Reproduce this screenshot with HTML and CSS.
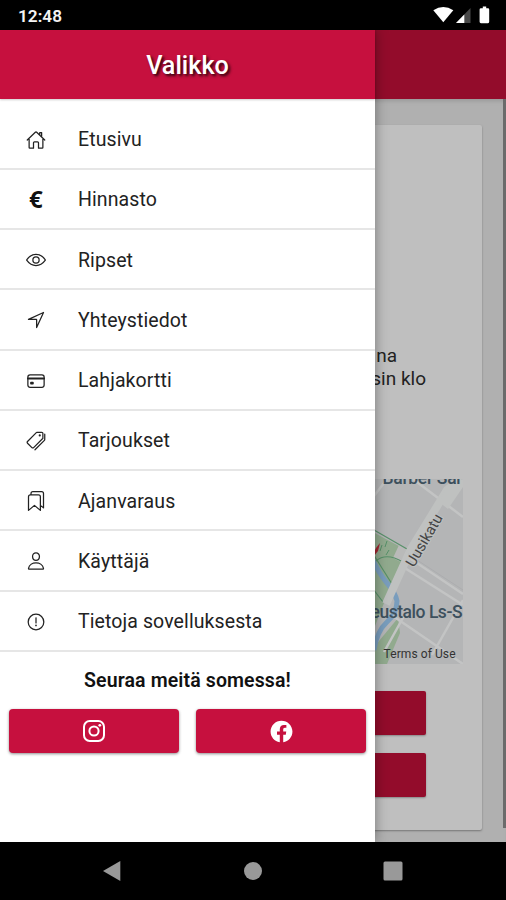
FILE: index.html
```html
<!DOCTYPE html>
<html lang="fi">
<head>
<meta charset="utf-8">
<title>Valikko</title>
<link rel="stylesheet" href="styles.css">
</head>
<body>
<div class="phone">
  <div class="status">
    <span class="clock">12:48</span>
    <svg class="status-icons" width="60" height="20" viewBox="430 5 60 20">
      <path d="M433.3 10.2Q443.3 4 453.3 10.2L443.3 22.3Z" fill="#fff"/>
      <path d="M470.5 8V23H456Z" fill="#484848"/>
      <path d="M464.3 14.5V23H456Z" fill="#fff"/>
      <path d="M481 8.300h1.800V6.500h3.400v1.800H488q1.200 0 1.200 1.200v12.300q0 1.400-1.200 1.400h-7q-1.400 0-1.400-1.400V9.500q0-1.200 1.400-1.200z" fill="#fff"/>
    </svg>
  </div>
  <div class="stage">
    <div class="page">
      <div class="page-bar"></div>
      <div class="page-body">
        <div class="card">
          <div class="hours"><span class="line short">na</span><span class="line">sin klo</span></div>
          <svg class="map" width="426" height="185" viewBox="37 479 426 185">
            <rect x="37" y="479" width="426" height="185" fill="#b4b5b6"/>
            <path d="M360 525L408 551L400 567L386 598L360 664Z" fill="#91aa8e"/>
            <path d="M398 618L360 664H387L400 633Z" fill="#91aa8e"/>
            <path d="M399 545L412 552L407 565L393 558Z" fill="#b9bab9"/>
            <path d="M370 554Q379 574 387 583T397 601Q397 613 387 622T374 650" fill="none" stroke="#799dbd" stroke-width="5"/>
            <path d="M374 530L407 549M370 549L392 584M370 585L383 602M376 561Q386 552 403 562" fill="none" stroke="#579069" stroke-width="1.200"/>
            <path d="M387 541l-2 6m-3-2l-2 6m9-1l-3 5" fill="none" stroke="#579069"/>
            <path d="M413 479L463 517M405 555L463 594M400 565L463 605M393 616L463 664M432 655L463 600M404 616L384 652M374 496L387 479" fill="none" stroke="#c3c4c4" stroke-width="2.500"/>
            <path d="M386 604L411 549L447 490L461 479" fill="none" stroke="#bfc1c0" stroke-width="8"/>
            <path d="M439 502l8-15 16-8v8l-15 22z" fill="#bfc1c0"/>
            <path d="M408 554L463 590" stroke="#acadaf" stroke-width="1"/>
            <path d="M373 554l3-6 4-5-2 8-4 5z" fill="#a22631"/>
            <text class="place" x="382.500" y="483.500" textLength="80">Barber Sar</text>
            <text class="place" x="370.500" y="617.500" textLength="92">eustalo Ls-S</text>
            <text class="street" transform="translate(414 568) rotate(-60)">Uusikatu</text>
            <text class="terms" x="383.500" y="657.500" textLength="72">Terms of Use</text>
          </svg>
          <div class="card-buttons"><div class="block"></div><div class="block"></div></div>
        </div>
        <div class="scrollbar"></div>
      </div>
    </div>
    <nav class="drawer">
      <div class="drawer-bar"><span class="title">Valikko</span></div>
      <div class="list">
        <div class="item"><svg class="icon" viewBox="0 0 512 512"><path d="M80 212v236a16 16 0 0016 16h96V328a24 24 0 0124-24h80a24 24 0 0124 24v136h96a16 16 0 0016-16V212M480 256L266.900 52c-5-5.300-16.700-5.300-21.800 0L32 256M400 179V64h-48v69"/></svg><span>Etusivu</span></div>
        <div class="item"><span class="icon euro">€</span><span>Hinnasto</span></div>
        <div class="item"><svg class="icon" viewBox="0 0 512 512"><path d="M255.700 112c-80.400 0-169.600 46.500-233.400 131.400a21 21 0 00-.1 24.500C71.300 337 154.600 400 255.700 400 355.600 400 440.600 336.800 489.800 267.600a21 21 0 000-23.800C440.500 175.500 354.900 112 255.700 112z"/><circle cx="256" cy="256" r="80"/></svg><span>Ripset</span></div>
        <div class="item"><svg class="icon" viewBox="0 0 512 512"><path d="M448 64L64 240.100h200a8 8 0 018 8V448z"/></svg><span>Yhteystiedot</span></div>
        <div class="item"><svg class="icon" viewBox="0 0 512 512"><rect x="48" y="96" width="416" height="320" rx="56"/><path class="heavy" d="M48 192h416"/><path class="heavy" d="M128 300h48v20h-48z"/></svg><span>Lahjakortti</span></div>
        <div class="item"><svg class="icon" viewBox="0 0 512 512"><path d="M403.300 32H280.400a14.500 14.500 0 00-10 4.100L38.800 267.700a31.600 31.600 0 000 45.600l112 112a31.600 31.600 0 0044.700 0l232.200-231.600a14.500 14.500 0 004.100-10V60.600A28.700 28.700 0 00403.300 32zM230 480L470.500 238.700A30 30 0 00480 217V80"/><circle class="solid" cx="352" cy="112" r="28"/></svg><span>Tarjoukset</span></div>
        <div class="item"><svg class="icon" viewBox="0 0 512 512"><path d="M128 80V64a48 48 0 0148-48h224a48 48 0 0148 48v368l-80-64M320 96H112a48 48 0 00-48 48v352l152-128 152 128V144a48 48 0 00-48-48z"/></svg><span>Ajanvaraus</span></div>
        <div class="item"><svg class="icon" viewBox="0 0 512 512"><path d="M344 144c-3.900 52.900-44 96-88 96s-84.200-43.100-88-96c-4-55 35-96 88-96s92 42 88 96zM256 304c-87 0-175.300 48-191.600 138.600C62.400 453.500 68.600 464 80 464h352c11.400 0 17.600-10.500 15.600-21.400C431.300 352 343 304 256 304z"/></svg><span>Käyttäjä</span></div>
        <div class="item"><svg class="icon" viewBox="0 0 512 512"><circle cx="256" cy="256" r="200"/><path d="M256 150v130"/><circle class="solid" cx="256" cy="345" r="22"/></svg><span>Tietoja sovelluksesta</span></div>
      </div>
      <div class="follow">Seuraa meitä somessa!</div>
      <div class="social">
        <div class="button"><svg width="24" height="24" viewBox="0 0 24 24"><rect x="2" y="2" width="20" height="20" rx="5.700" fill="none" stroke="#fff" stroke-width="2"/><circle cx="12" cy="12" r="4.600" fill="none" stroke="#fff" stroke-width="2"/><circle cx="17.800" cy="6.300" r="1.400" fill="#fff"/></svg></div>
        <div class="button"><svg width="25" height="25" viewBox="0 0 512 512"><path fill="#fff" fill-rule="evenodd" d="M480 257.400c0-123.700-100.300-224-224-224s-224 100.300-224 224c0 111.800 81.900 204.500 189 221.300V322.100h-56.900v-64.700H221V208c0-56.100 33.500-87.200 84.600-87.200 24.500 0 50.200 4.400 50.200 4.400v55.200h-28.300c-27.800 0-36.500 17.300-36.500 35v42h62.100l-9.900 64.700H291v156.600c107.100-16.800 189-109.500 189-221.300z"/></svg></div>
      </div>
    </nav>
  </div>
  <div class="navbar">
    <svg width="20" height="22" viewBox="0 0 20 22"><path d="M1 11L18.300 1v20z"/></svg>
    <svg width="20" height="22" viewBox="0 0 20 22"><circle cx="10" cy="11" r="9"/></svg>
    <svg width="20" height="22" viewBox="0 0 20 22"><rect x=".5" y="1.500" width="19" height="19" rx="1.500"/></svg>
  </div>
</div>
</body>
</html>
```
FILE: styles.css
```css
* { box-sizing: border-box; }
body { margin: 0; font-family: Roboto, "Liberation Sans", sans-serif; color: #222; }
.phone { width: 506px; height: 900px; display: flex; flex-direction: column; background: #000; overflow: hidden; }
.status { height: 30px; flex: none; display: flex; align-items: center; justify-content: space-between; padding: 0 16px 0 18px; color: #f4f4f4; }
.clock { font-size: 17.200px; font-weight: 600; padding-top: 2px; }
.stage { position: relative; height: 812px; flex: none; overflow: hidden; }

.page { height: 100%; display: flex; flex-direction: column; background: #b0b0b0; }
.page-bar { height: 69px; flex: none; background: #930c2b; }
.page-body { flex: 1; display: flex; justify-content: space-between; padding-left: 18px; box-shadow: inset 0 4px 4px -2px #999; }
.card { width: 464px; height: 705px; margin-top: 26px; background: #bfbfbf; border-radius: 2px; box-shadow: 0 1px 2px #777; display: flex; flex-direction: column; }
.hours { height: 354px; padding: 219px 56px 0 0; text-align: right; font-size: 19px; line-height: 23px; }
.line { display: block; }
.short { padding-right: 29px; }
.map { display: block; align-self: flex-end; margin-right: 19px; flex: none; }
.map text { font-family: Roboto, sans-serif; }
.place { font-size: 17.500px; font-weight: 500; fill: #3d505d; }
.street { font-size: 15px; fill: #444; stroke: #bfc1c0; stroke-width: 2px; paint-order: stroke; }
.terms { font-size: 12px; fill: #333; }
.card-buttons { display: flex; flex-direction: column; gap: 18px; padding: 27px 56px 0; }
.block { height: 44px; background: #930c2b; border-radius: 2px; box-shadow: 0 1px 2px #888; }
.scrollbar { width: 3px; height: 729px; background: #6b6b6b; }

.drawer { position: absolute; left: 0; top: 0; width: 375px; height: 100%; background: #fff; box-shadow: 0 0 12px rgba(0,0,0,.38); }
.drawer-bar { height: 69px; display: flex; align-items: center; justify-content: center; padding-top: 1px; background: #c6103e; box-shadow: 0 1px 2px rgba(0,0,0,.2); }
.title { color: #fff; font-size: 25.200px; font-weight: 500; text-shadow: 2px 2px 3px rgba(0,0,0,.8); }
.list { padding-top: 10.500px; }
.item { height: 60.250px; display: flex; align-items: center; gap: 32px; padding: 2px 0 0 26px; border-bottom: 2px solid #e6e6e6; font-size: 19.500px; letter-spacing: .1px; }
.icon { width: 20px; height: 20px; flex: none; fill: none; stroke: #222; stroke-width: 32px; stroke-linejoin: round; stroke-linecap: round; }
.heavy { stroke-width: 46px; }
.solid { fill: #222; stroke: none; }
.euro { font: 700 24px/18px "Noto Sans", sans-serif; text-align: center; color: #111; }
.follow { padding-top: 16px; height: 57.500px; text-align: center; font-size: 19.500px; line-height: 25px; font-weight: 600; letter-spacing: .12px; color: #111; }
.social { display: flex; gap: 17px; padding: 0 9px; }
.button { flex: 1; height: 44px; display: flex; align-items: center; justify-content: center; background: #c6103e; border-radius: 4px; box-shadow: 0 1px 3px rgba(0,0,0,.45); }

.navbar { flex: 1; display: flex; align-items: center; justify-content: space-between; padding: 0 103px 0 102px; }
.navbar svg { fill: #999; }
```
